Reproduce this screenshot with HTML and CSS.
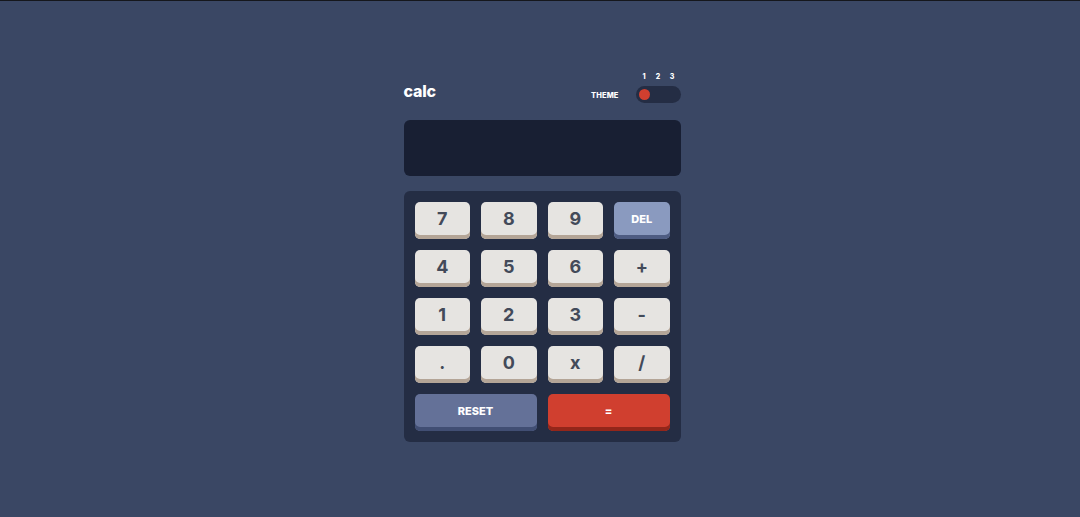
FILE: index.html
```html
<!DOCTYPE html>
<html lang="en">
<head>
<meta charset="utf-8">
<title>calc</title>
<link rel="stylesheet" href="styles.css">
</head>
<body>
<main class="calc">
  <header class="header">
    <h1 class="logo">calc</h1>
    <div class="theme">
      <span class="theme-label">THEME</span>
      <div class="switch">
        <div class="nums"><span>1</span><span>2</span><span>3</span></div>
        <div class="track"><span class="knob"></span></div>
      </div>
    </div>
  </header>
  <section class="screen"></section>
  <section class="pad">
    <button class="key">7</button>
    <button class="key">8</button>
    <button class="key">9</button>
    <button class="key key-blue">DEL</button>
    <button class="key">4</button>
    <button class="key">5</button>
    <button class="key">6</button>
    <button class="key">+</button>
    <button class="key">1</button>
    <button class="key">2</button>
    <button class="key">3</button>
    <button class="key">-</button>
    <button class="key">.</button>
    <button class="key">0</button>
    <button class="key">x</button>
    <button class="key">/</button>
    <button class="key key-reset">RESET</button>
    <button class="key key-equal">=</button>
  </section>
</main>
</body>
</html>
```
FILE: styles.css
```css
* { box-sizing: border-box; }
html, body { margin: 0; padding: 0; }
body {
  background: #3a4764;
  border-top: 1px solid #15171c;
  height: 517px;
  font-family: Inter, "Liberation Sans", sans-serif;
  color: #fff;
}
.calc {
  width: 277px;
  margin: 72px auto 0;
  position: relative;
  left: 2px;
}
.header {
  display: flex;
  justify-content: space-between;
  align-items: flex-end;
}
.logo {
  margin: 0 0 3px 0;
  font-size: 16px;
  line-height: 18px;
  font-weight: 800;
  letter-spacing: -0.2px;
}
.theme {
  display: flex;
  align-items: flex-end;
  gap: 17px;
}
.theme-label {
  font-size: 7.5px;
  font-weight: 800;
  line-height: 17px;
  letter-spacing: 0.1px;
  position: relative;
  top: 1px;
}
.switch {
  display: flex;
  flex-direction: column;
}
.nums {
  display: flex;
  padding: 0 3px;
  gap: 3px;
  margin-bottom: 5px;
}
.nums span {
  width: 11px;
  text-align: center;
  font-size: 7px;
  font-weight: 800;
  line-height: 8px;
}
.track {
  width: 45px;
  height: 17px;
  border-radius: 9px;
  background: #242d44;
  padding: 3px;
  display: flex;
}
.knob {
  width: 11px;
  height: 11px;
  border-radius: 50%;
  background: #d03f2f;
}
.screen {
  margin-top: 17px;
  height: 56px;
  background: #181f33;
  border-radius: 6px;
}
.pad {
  margin-top: 15px;
  background: #242d44;
  border-radius: 6px;
  padding: 11px;
  display: grid;
  grid-template-columns: repeat(4, 1fr);
  grid-auto-rows: 37px;
  gap: 11px 11px;
}
.key {
  border: none;
  border-radius: 5px;
  background: #e6e4e1;
  box-shadow: inset 0 -4px 0 #b4a597;
  color: #434a59;
  font-family: Inter, "Liberation Sans", sans-serif;
  font-size: 18px;
  font-weight: 700;
  padding: 0 0 4px 0;
  display: flex;
  align-items: center;
  justify-content: center;
}
.key-blue {
  background: #8a9abf;
  box-shadow: inset 0 -4px 0 #4e5c82;
  color: #fff;
  font-size: 11px;
  font-weight: 800;
}
.key-reset {
  grid-column: span 2;
  background: #647198;
  box-shadow: inset 0 -4px 0 #414e73;
  color: #fff;
  font-size: 11px;
  font-weight: 800;
}
.key-equal {
  grid-column: span 2;
  background: #d03f2f;
  box-shadow: inset 0 -4px 0 #93261a;
  color: #fff;
  font-size: 11px;
  font-weight: 800;
}
```
